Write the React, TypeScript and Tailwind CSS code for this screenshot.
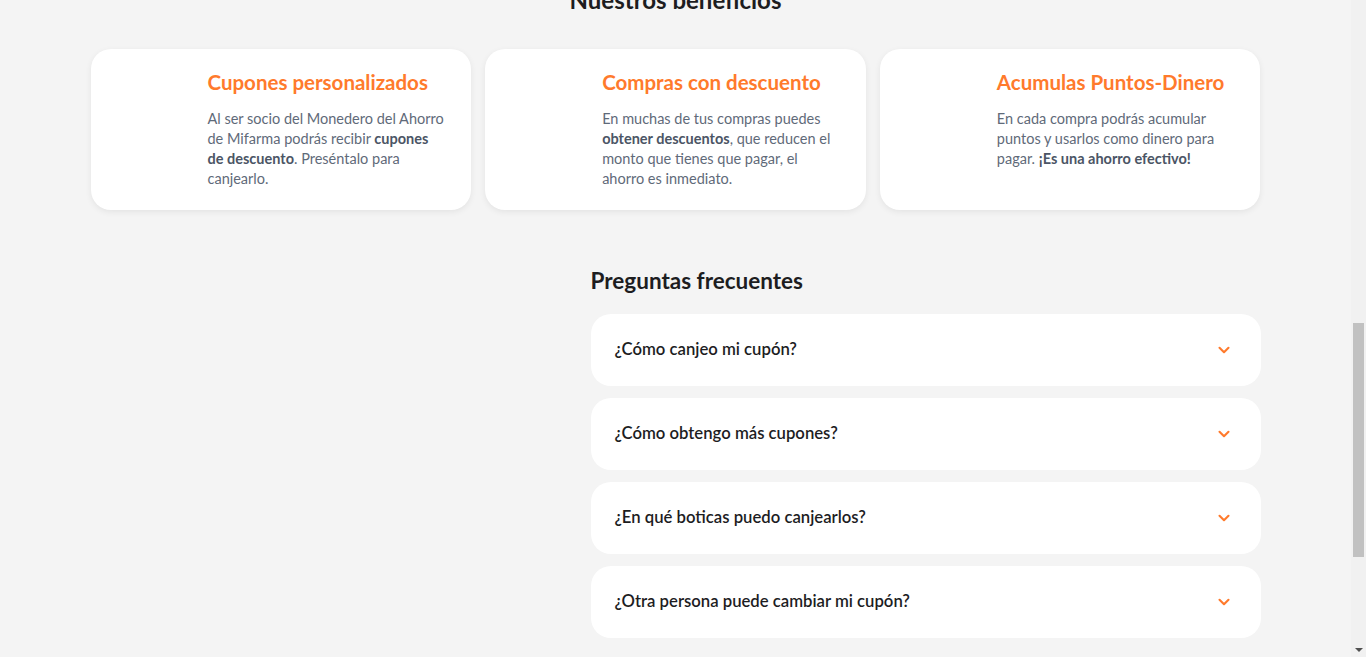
import React from 'react';
import { ChevronDown } from 'lucide-react';

const Benefits: React.FC = () => {
  const items = [
    {
      title: 'Cupones personalizados',
      body: (
        <>
          Al ser socio del Monedero del Ahorro de Mifarma podrás recibir{' '}
          <b className="font-bold text-[#4b5565]">cupones de descuento</b>. Preséntalo para canjearlo.
        </>
      ),
    },
    {
      title: 'Compras con descuento',
      body: (
        <>
          En muchas de tus compras puedes <b className="font-bold text-[#4b5565]">obtener descuentos</b>, que
          reducen el monto que tienes que pagar, el ahorro es inmediato.
        </>
      ),
    },
    {
      title: 'Acumulas Puntos-Dinero',
      body: (
        <>
          En cada compra podrás acumular puntos y usarlos como dinero para pagar.{' '}
          <b className="font-bold text-[#4b5565]">¡Es una ahorro efectivo!</b>
        </>
      ),
    },
  ];

  return (
    <section>
      <h2 className="-mt-[14px] text-center text-[24px] leading-[28px] font-bold text-[#1d1d1f]">
        Nuestros beneficios
      </h2>
      <div className="mt-[35px] grid grid-cols-3 gap-[14px]">
        {items.map((it, i) => (
          <div
            key={i}
            className="bg-white rounded-[20px] shadow-[0_2px_6px_rgba(0,0,0,0.07)] pl-[117px] pr-[24px] pt-[21px] pb-[21px] h-[161px]"
          >
            <h3 className="text-[20.5px] leading-[24px] font-bold text-[#ff7a2c]">{it.title}</h3>
            <p className="mt-[15px] text-[14.5px] leading-[20px] text-[#5f6a79]">{it.body}</p>
          </div>
        ))}
      </div>
    </section>
  );
};

const Faq: React.FC = () => {
  const questions = [
    '¿Cómo canjeo mi cupón?',
    '¿Cómo obtengo más cupones?',
    '¿En qué boticas puedo canjearlos?',
    '¿Otra persona puede cambiar mi cupón?',
  ];

  return (
    <section className="mt-[58px] grid grid-cols-[500px_1fr]">
      <div></div>
      <div>
        <h2 className="text-[22.5px] leading-[26px] font-bold text-[#1d1d1f]">Preguntas frecuentes</h2>
        <div className="mt-[20px] flex flex-col gap-[12px]">
          {questions.map((q) => (
            <button
              key={q}
              className="h-[72px] w-full bg-white rounded-[20px] pl-[24px] pr-[28px] flex items-center justify-between text-left"
            >
              <span className="text-[16.7px] font-semibold text-[#1d1d1f]">{q}</span>
              <ChevronDown className="w-[18px] h-[18px] text-[#ff7a2c]" strokeWidth={2.8} />
            </button>
          ))}
        </div>
      </div>
    </section>
  );
};

const Scrollbar: React.FC = () => (
  <div className="w-[15px] shrink-0 bg-[#f1f1f1] flex flex-col h-[657px]">
    <div className="h-[323px]"></div>
    <div className="mx-[2px] h-[234px] bg-[#c1c1c1]"></div>
    <div className="flex-1 flex items-end justify-center pb-[5px]">
      <div className="w-0 h-0 border-l-[4px] border-r-[4px] border-t-[4px] border-l-transparent border-r-transparent border-t-[#505050]"></div>
    </div>
  </div>
);

export default function App() {
  return (
    <div className="h-[657px] flex bg-[#f4f4f4] font-['Lato',sans-serif] overflow-hidden">
      <div className="flex-1">
        <div className="w-[1170px] mx-auto">
          <Benefits />
          <Faq />
        </div>
      </div>
      <Scrollbar />
    </div>
  );
}
